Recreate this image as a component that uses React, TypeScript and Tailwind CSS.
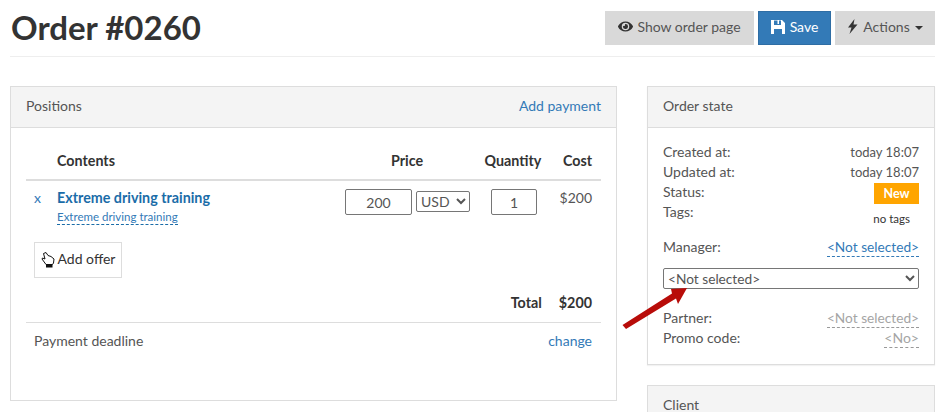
import { FaEye } from "react-icons/fa"

function Row({ label, children }: { label: string; children?: React.ReactNode }) {
  return (
    <div className="flex h-5 justify-between leading-5">
      <span>{label}</span>
      {children}
    </div>
  )
}

export default function App() {
  return (
    <div className="relative h-[412px] w-[944px] overflow-hidden bg-white pl-[10px] pr-[9px] font-['Lato',sans-serif] text-[14px] text-[#555555]">
      <div className="flex h-[57px] items-start justify-between border-b border-[#eeeeee] pt-[11px]">
        <h1 className="ml-px -mt-px text-[33px] font-bold leading-[34px] text-[#333333]">Order #0260</h1>
        <div className="flex gap-1">
          <button className="flex h-[34px] w-[149px] items-center justify-center gap-1 bg-[#d9d9d9] pb-[3px]">
            <FaEye className="text-[15px] text-[#333333]" />
            Show order page
          </button>
          <button className="flex h-[34px] w-[73px] items-center justify-center gap-[5px] border border-[#2e6da4] bg-[#337ab7] pb-[3px] text-white">
            <svg width="14" height="14" viewBox="0 0 14 14">
              <path
                fillRule="evenodd"
                d="M0 0H11L14 3V14H0ZM3 0.5V5H10V0.5H8V4H6.5V0.5ZM3 9V14H11V9Z"
                fill="white"
              />
            </svg>
            Save
          </button>
          <button className="flex h-[34px] w-[100px] items-center justify-center gap-[5px] bg-[#d9d9d9] pb-[3px]">
            <svg width="11" height="15" viewBox="0 0 11 15">
              <path d="M7.5 0L1 8.5H4.5L2.5 15L10.5 5.5H6.5Z" fill="#333333" />
            </svg>
            Actions
            <span className="mt-[2px] border-x-4 border-t-4 border-x-transparent border-t-[#333333]" />
          </button>
        </div>
      </div>

      <div className="mt-[29px] flex items-start gap-[30px]">
        <div className="h-[315px] w-[607px] border border-[#dddddd]">
          <div className="flex h-[41px] items-center justify-between border-b border-[#dddddd] bg-[#f4f4f4] px-[15px] pb-1">
            <span>Positions</span>
            <a className="text-[#337ab7]">Add payment</a>
          </div>
          <div className="px-[15px]">
            <div className="mt-[22px] flex h-[31px] border-b-2 border-[#dddddd] text-[14.3px] font-bold leading-[22px] text-[#333333]">
              <span className="ml-[31px] w-[285px]">Contents</span>
              <span className="w-[130px] text-center">Price</span>
              <span className="w-[82px] text-center">Quantity</span>
              <span className="flex-1 pr-[9px] text-right">Cost</span>
            </div>
            <div className="flex h-[61px] pt-[7px]">
              <span className="ml-2 w-[23px] leading-5 text-[#337ab7]">x</span>
              <div className="w-[288px]">
                <div className="text-[14.3px] font-bold leading-5 text-[#1a6ca8]">Extreme driving training</div>
                <a className="mt-px block w-fit border-b border-dashed border-[#1a6ca8] text-[11.5px] leading-[15px] text-[#337ab7]">
                  Extreme driving training
                </a>
              </div>
              <input
                readOnly
                value="200"
                className="mt-px h-[26px] w-[67px] rounded-[2px] border border-[#767676] text-center"
              />
              <select className="ml-1 mt-[3px] h-[21px] w-[54px] rounded-[2px] border border-[#767676] bg-white">
                <option>USD</option>
              </select>
              <input
                readOnly
                value="1"
                className="ml-[21px] mt-px h-[26px] w-[46px] rounded-[2px] border border-[#767676] text-center"
              />
              <span className="flex-1 pr-[9px] text-right leading-5">$200</span>
            </div>
            <button className="ml-2 flex h-[36px] w-[88px] items-center justify-center gap-[3px] border border-[#dddddd] pb-[3px] text-[#333333]">
              <svg width="14" height="16" viewBox="0 0 14 16" className="mt-[3px] shrink-0">
                <path
                  d="M2.5 1.5 L5 0.5 L7 3.5 L10 4.5 L13 7 L12.5 11 L11.5 12.5 L5 12.5 L1 7 L1.5 6 L4 7 Z"
                  fill="white"
                  stroke="#111111"
                  strokeWidth="1"
                />
                <rect x="5" y="12.5" width="6.5" height="3" fill="#111111" />
              </svg>
              Add offer
            </button>
            <div className="mt-[15px] flex h-[29px] justify-end gap-[17px] pr-[9px] text-[14.3px] font-bold leading-5 text-[#333333]">
              <span>Total</span>
              <span>$200</span>
            </div>
            <div className="flex justify-between border-t border-[#dddddd] pl-2 pr-[9px] pt-2 leading-5">
              <span>Payment deadline</span>
              <a className="text-[#337ab7]">change</a>
            </div>
          </div>
        </div>

        <div className="flex flex-col gap-5">
          <div className="h-[279px] w-[288px] border border-[#dddddd] shadow-[0_1px_1px_rgba(0,0,0,0.05)]">
            <div className="flex h-[41px] items-center border-b border-[#dddddd] bg-[#f4f4f4] px-[15px] pb-1">Order state</div>
            <div className="px-[15px] pt-[14px]">
              <Row label="Created at:">
                <span className="text-[13px]">today 18:07</span>
              </Row>
              <Row label="Updated at:">
                <span className="text-[13px]">today 18:07</span>
              </Row>
              <Row label="Status:">
                <span className="mt-px flex h-[21px] w-[45px] items-center justify-center bg-[#ffa500] text-[12.5px] font-bold text-white">
                  New
                </span>
              </Row>
              <div className="flex h-[35px] justify-between leading-5">
                <span>Tags:</span>
                <span className="mr-[9px] mt-[7px] text-[11.5px] text-[#333333]">no tags</span>
              </div>
              <Row label="Manager:">
                <a className="h-[20px] border-b border-dashed border-[#337ab7] text-[13.7px] text-[#337ab7]">&lt;Not selected&gt;</a>
              </Row>
              <select className="mt-[11px] block h-[21px] w-full rounded-[2px] border border-[#767676] bg-white text-[13.7px]">
                <option>&lt;Not selected&gt;</option>
              </select>
              <div className="mt-[19px]">
                <Row label="Partner:">
                  <a className="h-[20px] border-b border-dashed border-[#999999] text-[13.7px] text-[#a5a5a5]">&lt;Not selected&gt;</a>
                </Row>
                <Row label="Promo code:">
                  <a className="h-[20px] border-b border-dashed border-[#999999] text-[#a5a5a5]">&lt;No&gt;</a>
                </Row>
              </div>
            </div>
          </div>
          <div className="h-[41px] w-[288px] border border-[#dddddd] bg-[#f4f4f4] px-[15px] pt-[9px] leading-5">Client</div>
        </div>
      </div>

      <svg className="absolute left-[620px] top-[284px]" width="72" height="46" viewBox="0 0 72 46">
        <path d="M67 4L58 20L56 14.5L6 45L2.5 41L52 9.5L51 5Z" fill="#b80c09" />
      </svg>
    </div>
  )
}
